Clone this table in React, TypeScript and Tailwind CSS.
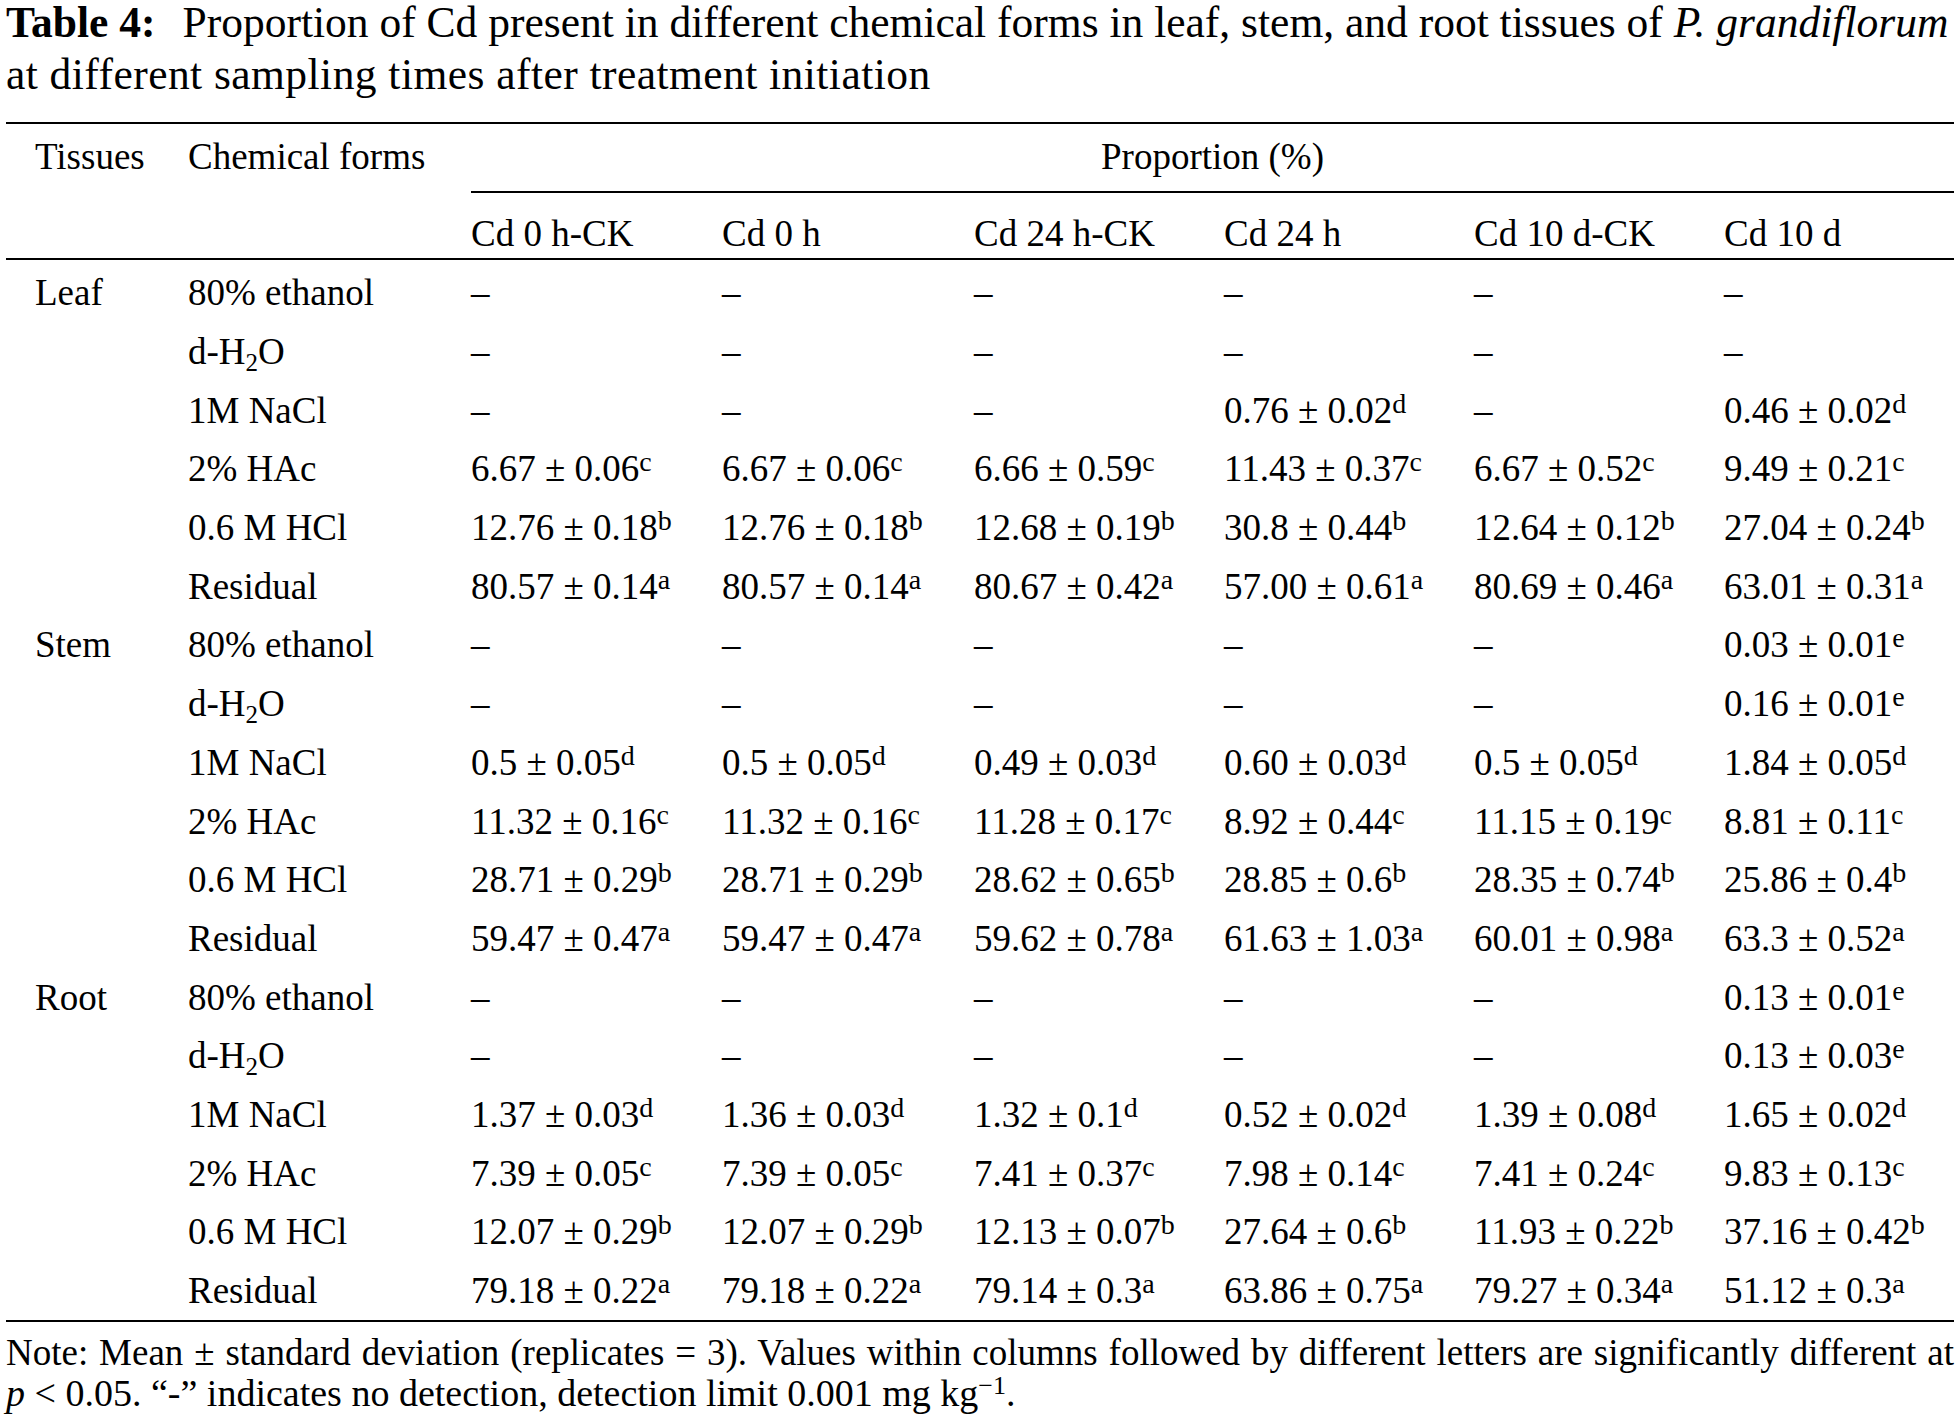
type Cell = '–' | [string, string];

type Group = {
  tissue: string;
  rows: { form: React.ReactNode; cells: Cell[] }[];
};

const D: Cell = '–';

const H2O = (
  <>
    d-H<sub className="text-[25px] bottom-[-7px]">2</sub>O
  </>
);

const groups: Group[] = [
  {
    tissue: 'Leaf',
    rows: [
      { form: '80% ethanol', cells: [D, D, D, D, D, D] },
      { form: H2O, cells: [D, D, D, D, D, D] },
      { form: '1M NaCl', cells: [D, D, D, ['0.76 ± 0.02', 'd'], D, ['0.46 ± 0.02', 'd']] },
      {
        form: '2% HAc',
        cells: [
          ['6.67 ± 0.06', 'c'],
          ['6.67 ± 0.06', 'c'],
          ['6.66 ± 0.59', 'c'],
          ['11.43 ± 0.37', 'c'],
          ['6.67 ± 0.52', 'c'],
          ['9.49 ± 0.21', 'c'],
        ],
      },
      {
        form: '0.6 M HCl',
        cells: [
          ['12.76 ± 0.18', 'b'],
          ['12.76 ± 0.18', 'b'],
          ['12.68 ± 0.19', 'b'],
          ['30.8 ± 0.44', 'b'],
          ['12.64 ± 0.12', 'b'],
          ['27.04 ± 0.24', 'b'],
        ],
      },
      {
        form: 'Residual',
        cells: [
          ['80.57 ± 0.14', 'a'],
          ['80.57 ± 0.14', 'a'],
          ['80.67 ± 0.42', 'a'],
          ['57.00 ± 0.61', 'a'],
          ['80.69 ± 0.46', 'a'],
          ['63.01 ± 0.31', 'a'],
        ],
      },
    ],
  },
  {
    tissue: 'Stem',
    rows: [
      { form: '80% ethanol', cells: [D, D, D, D, D, ['0.03 ± 0.01', 'e']] },
      { form: H2O, cells: [D, D, D, D, D, ['0.16 ± 0.01', 'e']] },
      {
        form: '1M NaCl',
        cells: [
          ['0.5 ± 0.05', 'd'],
          ['0.5 ± 0.05', 'd'],
          ['0.49 ± 0.03', 'd'],
          ['0.60 ± 0.03', 'd'],
          ['0.5 ± 0.05', 'd'],
          ['1.84 ± 0.05', 'd'],
        ],
      },
      {
        form: '2% HAc',
        cells: [
          ['11.32 ± 0.16', 'c'],
          ['11.32 ± 0.16', 'c'],
          ['11.28 ± 0.17', 'c'],
          ['8.92 ± 0.44', 'c'],
          ['11.15 ± 0.19', 'c'],
          ['8.81 ± 0.11', 'c'],
        ],
      },
      {
        form: '0.6 M HCl',
        cells: [
          ['28.71 ± 0.29', 'b'],
          ['28.71 ± 0.29', 'b'],
          ['28.62 ± 0.65', 'b'],
          ['28.85 ± 0.6', 'b'],
          ['28.35 ± 0.74', 'b'],
          ['25.86 ± 0.4', 'b'],
        ],
      },
      {
        form: 'Residual',
        cells: [
          ['59.47 ± 0.47', 'a'],
          ['59.47 ± 0.47', 'a'],
          ['59.62 ± 0.78', 'a'],
          ['61.63 ± 1.03', 'a'],
          ['60.01 ± 0.98', 'a'],
          ['63.3 ± 0.52', 'a'],
        ],
      },
    ],
  },
  {
    tissue: 'Root',
    rows: [
      { form: '80% ethanol', cells: [D, D, D, D, D, ['0.13 ± 0.01', 'e']] },
      { form: H2O, cells: [D, D, D, D, D, ['0.13 ± 0.03', 'e']] },
      {
        form: '1M NaCl',
        cells: [
          ['1.37 ± 0.03', 'd'],
          ['1.36 ± 0.03', 'd'],
          ['1.32 ± 0.1', 'd'],
          ['0.52 ± 0.02', 'd'],
          ['1.39 ± 0.08', 'd'],
          ['1.65 ± 0.02', 'd'],
        ],
      },
      {
        form: '2% HAc',
        cells: [
          ['7.39 ± 0.05', 'c'],
          ['7.39 ± 0.05', 'c'],
          ['7.41 ± 0.37', 'c'],
          ['7.98 ± 0.14', 'c'],
          ['7.41 ± 0.24', 'c'],
          ['9.83 ± 0.13', 'c'],
        ],
      },
      {
        form: '0.6 M HCl',
        cells: [
          ['12.07 ± 0.29', 'b'],
          ['12.07 ± 0.29', 'b'],
          ['12.13 ± 0.07', 'b'],
          ['27.64 ± 0.6', 'b'],
          ['11.93 ± 0.22', 'b'],
          ['37.16 ± 0.42', 'b'],
        ],
      },
      {
        form: 'Residual',
        cells: [
          ['79.18 ± 0.22', 'a'],
          ['79.18 ± 0.22', 'a'],
          ['79.14 ± 0.3', 'a'],
          ['63.86 ± 0.75', 'a'],
          ['79.27 ± 0.34', 'a'],
          ['51.12 ± 0.3', 'a'],
        ],
      },
    ],
  },
];

const columns = ['Cd 0 h-CK', 'Cd 0 h', 'Cd 24 h-CK', 'Cd 24 h', 'Cd 10 d-CK', 'Cd 10 d'];

const GRID = 'grid grid-cols-[182px_283px_251px_252px_250px_250px_250px_1fr]';

function Value({ cell }: { cell: Cell }) {
  if (cell === '–') return <span>–</span>;
  return (
    <span className="whitespace-nowrap">
      {cell[0]}
      <sup className="text-[28px] top-[-10px]">{cell[1]}</sup>
    </span>
  );
}

export default function App() {
  return (
    <div className="min-h-screen bg-white px-[6px] font-['Liberation_Serif','Times_New_Roman',serif] text-[37px] text-black">
      <div className="-mt-1 text-[43.5px] leading-[52px]">
        <div className="whitespace-nowrap">
          <span className="font-bold">Table 4:</span>
          <span className="ml-[27px]">
            Proportion of Cd present in different chemical forms in leaf, stem, and root tissues of{' '}
            <i>P. grandiflorum</i>
          </span>
        </div>
        <div className="tracking-[0.45px]">at different sampling times after treatment initiation</div>
      </div>

      <div className="mt-[21.5px] border-t-2 border-black">
        <div className={`${GRID} h-[69px] leading-[40px]`}>
          <div className="flex items-center pb-[2px] pl-[29px]">Tissues</div>
          <div className="flex items-center pb-[2px]">Chemical forms</div>
          <div className="col-span-6 flex items-center justify-center border-b-2 border-black">
            Proportion (%)
          </div>
        </div>
        <div className={`${GRID} h-[67.5px] border-b-2 border-black leading-[40px]`}>
          <div />
          <div />
          {columns.map((c) => (
            <div key={c} className="flex items-end pb-[4px]">
              {c}
            </div>
          ))}
        </div>

        <div className="border-b-2 border-black pt-[4px] leading-[40px]">
          {groups.map((g) =>
            g.rows.map((r, i) => (
              <div key={`${g.tissue}-${i}`} className={`${GRID} h-[58.7px] items-center`}>
                <div className="pl-[29px]">{i === 0 ? g.tissue : ''}</div>
                <div>{r.form}</div>
                {r.cells.map((c, j) => (
                  <div key={j}>
                    <Value cell={c} />
                  </div>
                ))}
              </div>
            )),
          )}
        </div>
      </div>

      <div className="mt-[10px] leading-[41px]">
        <div className="whitespace-nowrap text-justify [text-align-last:justify]">
          Note: Mean ± standard deviation (replicates = 3). Values within columns followed by different
          letters are significantly different at
        </div>
        <div className="text-[38px]">
          <i>p</i> &lt; 0.05. “-” indicates no detection, detection limit 0.001 mg kg
          <sup className="text-[26px] top-[-12px]">−1</sup>.
        </div>
      </div>
    </div>
  );
}
